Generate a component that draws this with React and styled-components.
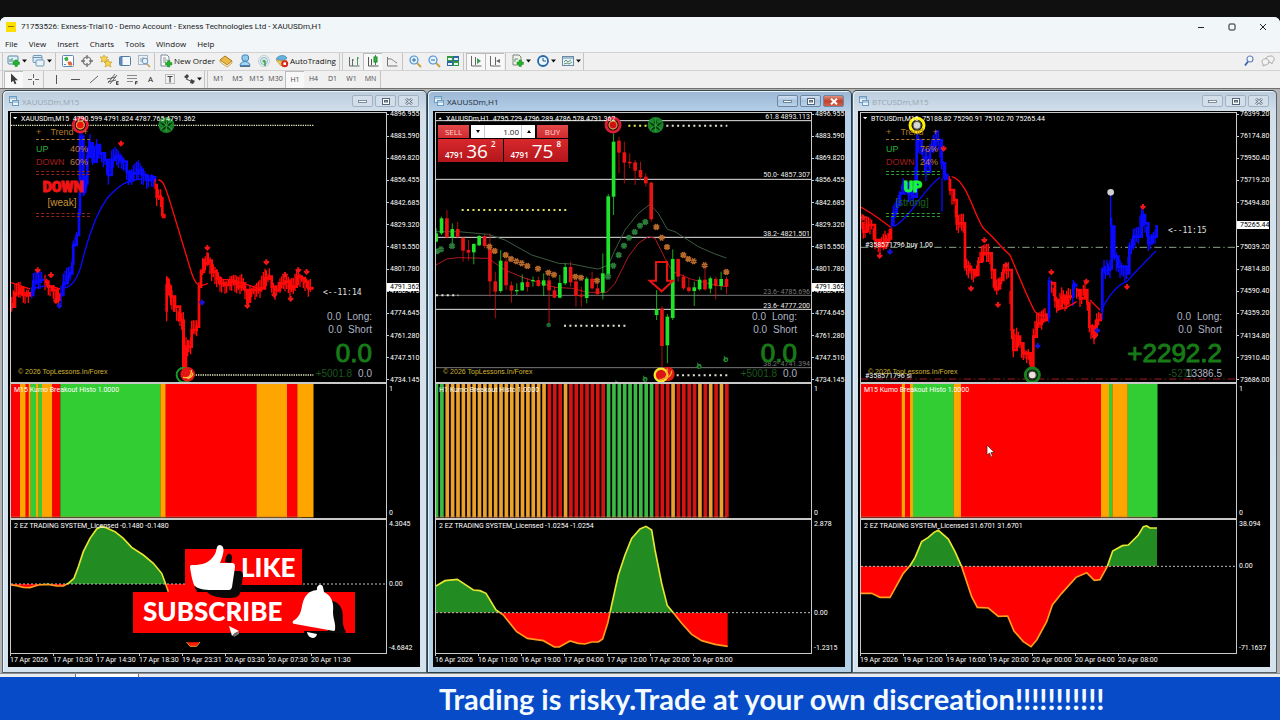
import React from 'react';
import styled, { createGlobalStyle, css } from 'styled-components';

const ui = `"Open Sans", "Noto Sans", sans-serif`;
const chartFont = `Roboto, "Liberation Sans", sans-serif`;
const arial = `"Liberation Sans", sans-serif`;

const GlobalStyle = createGlobalStyle`
  *, *::before, *::after { box-sizing: border-box; }
  body { margin: 0; background: #101010; font-family: ${ui}; }
  button, input { font: inherit; color: inherit; padding: 0; margin: 0; border: 0; background: none; }
`;

const Screen = styled.div`
  position: relative;
  display: flex;
  flex-direction: column;
  min-height: 100vh;
  padding-top: 17px;
  background: #101010;
  overflow: hidden;
`;
const Terminal = styled.div`
  display: flex;
  flex-direction: column;
  background: #f0f0f0;
  border-radius: 6px 6px 0 0;
  overflow: hidden;
`;
const TitleBar = styled.header`
  display: flex;
  align-items: center;
  gap: 5px;
  height: 19px;
  padding: 0 4px 0 6px;
  background: #f1f6f9;
  color: #1c1c1c;
  font-size: 8px;
`;
const AppLogo = styled.span`
  display: flex;
  align-items: center;
  justify-content: center;
  width: 10px;
  height: 10px;
  background: #fde000;
  &::after { content: ''; width: 6px; height: 1px; background: #8a7a10; }
`;
const AppTitle = styled.h1`
  flex: 1;
  margin: 0;
  font-family: Roboto, sans-serif;
  font-size: 8px;
  font-weight: 400;
  white-space: nowrap;
`;
const SystemButton = styled.button`
  display: flex;
  justify-content: center;
  align-items: center;
  width: 26px;
  height: 18px;
`;
const MenuBar = styled.nav`
  display: flex;
  gap: 11px;
  height: 16px;
  padding-left: 5px;
  background: #f3f6f8;
  align-items: center;
`;
const MenuItem = styled.button`
  color: #111;
  font-size: 8px;
  line-height: 14px;
`;
const ToolRow = styled.div`
  display: flex;
  align-items: stretch;
  height: 18px;
  border-top: 1px solid #d2d2d2;
`;
const ToolGroup = styled.div`
  display: flex;
  align-items: stretch;
  border-right: 1px solid #c4c4c4;
  padding-left: 4px;
  background: linear-gradient(90deg, transparent 2px, #c8c8c8 2px, #c8c8c8 3px, transparent 3px);
`;
const ToolSep = styled.span`
  width: 4px;
  background: linear-gradient(90deg, transparent 1px, #c4c4c4 1px, #c4c4c4 2px, transparent 2px);
`;
const ToolButton = styled.button`
  display: flex;
  align-items: center;
  justify-content: ${(p) => (p.$label ? 'flex-start' : 'center')};
  gap: 1px;
  width: ${(p) => p.$w || 19}px;
  padding-left: ${(p) => (p.$label ? 2 : 0)}px;
  padding-bottom: 2px;
  font-size: ${(p) => (p.$small ? 7 : 8)}px;
  color: ${(p) => (p.$small ? '#4c4c4c' : '#111')};
  white-space: nowrap;
  ${(p) => p.$pressed && css`
    background: #f8f8f8;
    border-top: 1px solid #bdbdbd;
    border-left: 1px solid #bdbdbd;
  `}
`;
const ToolSide = styled.div`
  display: flex;
  margin-left: auto;
  padding-right: 3px;
`;
const Workspace = styled.main`
  display: grid;
  grid-template-columns: repeat(3, minmax(0, 1fr));
  padding: 1px 3px 0 2px;
  border-top: 1px solid #707070;
  background: #b4b4b4;
`;
const WindowFrame = styled.section`
  display: flex;
  flex-direction: column;
  min-width: 0;
  padding: 0 6px 5px 5px;
  border: 1px solid ${(p) => (p.$active ? '#23404f' : '#50616c')};
  border-top-color: #39434a;
  border-radius: 5px 5px 0 0;
  background: ${(p) => (p.$active
    ? 'linear-gradient(#9bb7d4, #b6d0e9 22px, #b3d0e6)'
    : 'linear-gradient(#bccddd, #d3e0ec 22px, #d5e3ee)')};
  box-shadow: inset 1px 1px 0 #e9f3fa;
`;
const WindowTitle = styled.div`
  display: flex;
  align-items: center;
  gap: 2px;
  height: 20px;
  padding-right: 1px;
`;
const WindowName = styled.h2`
  flex: 1;
  margin: 0;
  font-size: 8px;
  font-weight: 400;
  color: ${(p) => (p.$active ? '#1b2b3a' : '#98a5b2')};
`;
const WindowButton = styled.button`
  display: flex;
  align-items: center;
  justify-content: center;
  width: 21px;
  height: 12px;
  border: 1px solid ${(p) => (p.$active ? '#6b86a2' : '#a3b2c1')};
  border-radius: 2px;
  background: ${(p) => (p.$danger
    ? 'linear-gradient(#dd8f80, #c2402c 50%, #d0604c)'
    : p.$active ? 'linear-gradient(#cfe0f1, #a8c3de 50%, #bcd4ea)' : '#d2deea')};
`;
const WindowButtons = styled.div`
  display: flex;
  gap: 2px;
`;
const ChartBox = styled.div`
  display: flex;
  flex-direction: column;
  padding: 1px 0 0 2px;
  background: #000;
  color: #fff;
  font-family: ${chartFont};
  font-size: 7px;
  line-height: 8px;
`;
const ChartRow = styled.div`
  display: flex;
  height: ${(p) => p.$h}px;
`;
const Plot = styled.div`
  position: relative;
  flex: 1;
  min-width: 0;
  overflow: hidden;
  border: solid #c9c9c9;
  border-width: ${(p) => p.$edges};
  > svg { display: block; width: 100%; height: 100%; }
`;
const PlotCaption = styled.p`
  position: absolute;
  left: ${(p) => (p.$indent ? 10 : 3)}px;
  top: 2px;
  margin: 0;
  white-space: pre;
`;
const Scale = styled.ol`
  position: relative;
  display: flex;
  flex-direction: column;
  justify-content: space-between;
  width: 33px;
  margin: ${(p) => p.$margin || '0'};
  padding: ${(p) => p.$pad || '0'};
  list-style: none;
`;
const PriceMark = styled.li`
  display: flex;
  align-items: center;
  gap: 1px;
  height: 8px;
  &::before { content: ''; width: 2px; height: 1px; background: #ccc; }
`;
const PlainMark = styled.li`
  padding-left: 2px;
`;
const CurrentPrice = styled.li`
  position: absolute;
  left: 0;
  width: 32px;
  height: 8px;
  padding-left: 3px;
  background: #fff;
  color: #000;
`;
const ZeroMark = styled.li`
  position: absolute;
  left: 2px;
`;
const TimeAxis = styled.ol`
  display: flex;
  height: 13px;
  margin: 0;
  padding: 0;
  list-style: none;
`;
const TimeMark = styled.li`
  width: 43px;
  padding-top: 2px;
  white-space: nowrap;
  background: linear-gradient(#c9c9c9, #c9c9c9) 0 0 / 1px 2px no-repeat;
`;
const Account = styled.dl`
  position: absolute;
  right: 14px;
  bottom: 2px;
  display: flex;
  flex-direction: column;
  align-items: flex-end;
  margin: 0;
  color: #aeb4c4;
  font-family: ${arial};
  font-size: 10px;
  line-height: 13px;
`;
const AccountRow = styled.div`
  display: flex;
  flex-direction: row-reverse;
  gap: 6px;
`;
const AccountLabel = styled.dt``;
const AccountValue = styled.dd`
  margin: 0;
  color: ${(p) => (p.$green ? '#1c571c' : 'inherit')};
  margin-right: ${(p) => (p.$overlap ? -14 : 0)}px;
`;
const Profit = styled.div`
  margin-top: 3px;
  color: #177a17;
  font-size: 26px;
  line-height: 28px;
  -webkit-text-stroke: 1px #177a17;
`;
const Copyright = styled.p`
  position: absolute;
  left: 7px;
  bottom: 6px;
  margin: 0;
  color: #d0b531;
  font-family: ${arial};
`;
const TrendPanel = styled.div`
  position: absolute;
  left: 25px;
  top: 14px;
  display: flex;
  flex-direction: column;
  width: 54px;
  font-family: ${arial};
  font-size: 9px;
  line-height: 10px;
`;
const TrendLine = styled.div`
  display: flex;
  justify-content: ${(p) => (p.$center ? 'center' : 'space-between')};
  margin-top: ${(p) => p.$gap || 0}px;
  padding-right: 2px;
  color: ${(p) => p.$c};
  font-size: ${(p) => (p.$center ? 10 : 9)}px;
`;
const TrendPart = styled.span`
  color: ${(p) => p.$c};
`;
const TrendRule = styled.div`
  height: ${(p) => (p.$double ? 4 : 1)}px;
  margin-top: ${(p) => p.$gap}px;
  border: dashed ${(p) => p.$c};
  border-width: ${(p) => (p.$double ? '1px 0' : '1px 0 0')};
`;
const Verdict = styled.strong`
  margin-top: 3px;
  text-align: center;
  color: ${(p) => p.$c};
  font-family: Roboto, ${arial};
  font-weight: 900;
  font-size: 14px;
  line-height: 18px;
  -webkit-text-stroke: 1px ${(p) => p.$c};
`;
const FibLabel = styled.span`
  position: absolute;
  right: 1px;
  color: ${(p) => (p.$dim ? '#777' : '#eee')};
`;
const Ticket = styled.form`
  position: absolute;
  left: 2px;
  top: 12px;
  display: grid;
  grid-template-columns: repeat(2, minmax(0, 1fr));
  gap: 1px;
  width: 130px;
  color: #fff;
  font-family: ${ui};
`;
const TicketTop = styled.div`
  grid-column: 1 / -1;
  display: flex;
  gap: 2px;
  height: 13px;
`;
const TicketSide = styled.button`
  flex: none;
  width: 31px;
  background: linear-gradient(#e24848, #d22a2e);
  font-size: 8px;
  line-height: 13px;
  color: #f5dcdc;
`;
const Volume = styled.div`
  display: flex;
  flex: 1;
  min-width: 0;
  align-items: stretch;
  background: #fff;
  color: #222;
  font-size: 8px;
`;
const VolumeStep = styled.button`
  display: flex;
  flex: none;
  align-items: center;
  justify-content: center;
  width: 13px;
`;
const VolumeInput = styled.input`
  flex: 1;
  min-width: 0;
  border: solid #ccc;
  border-width: 0 1px;
  padding-right: 2px;
  text-align: right;
`;
const Quote = styled.button`
  display: flex;
  justify-content: center;
  align-items: flex-end;
  gap: 3px;
  height: 23px;
  padding-bottom: 3px;
  background: linear-gradient(#d9282c, #b3161b);
  font-size: 8px;
  line-height: 8px;
  font-weight: 600;
`;
const QuotePips = styled.span`
  font-size: 19px;
  line-height: 16px;
  font-weight: 400;
`;
const QuotePoint = styled.sup`
  align-self: flex-start;
  padding-top: 1px;
  font-size: 8px;
  line-height: 8px;
`;
const TabStrip = styled.div`
  display: flex;
  height: 4px;
  padding-left: 75px;
  border-top: 1px solid #8e8e8e;
  background: #e8ecee;
`;
const ActiveTab = styled.span`
  width: 64px;
  background: #fff;
  border: solid #777;
  border-width: 0 1px;
`;
const Banner = styled.footer`
  flex: 1;
  display: flex;
  align-items: center;
  min-height: 43px;
  padding-left: 439px;
  background: #084bc8;
  color: #f4fbff;
  font-family: Lato, sans-serif;
  font-weight: 700;
  font-size: 29px;
  line-height: 36px;
  font-variant-ligatures: none;
  white-space: nowrap;
`;
const Promo = styled.div`
  position: absolute;
  left: 133px;
  top: 549px;
  display: flex;
  flex-direction: column;
  gap: 7px;
  width: 222px;
  color: #fff;
  font-family: Lato, sans-serif;
  font-weight: 900;
  font-size: 26px;
`;
const LikeTag = styled.div`
  width: 117px;
  height: 36px;
  margin-left: 52px;
  padding-left: 56px;
  background: #fe0000;
  line-height: 36px;
`;
const SubscribeTag = styled.div`
  height: 41px;
  padding-left: 10px;
  background: #fe0000;
  line-height: 39px;
`;
const PromoArt = styled.svg`
  position: absolute;
  left: 0;
  top: -8px;
`;
const Pointer = styled.svg`
  position: absolute;
  left: 986px;
  top: 444px;
`;

/* ---------- toolbar icons, 14 x 14 ---------- */
const Plus = ({ x = 8, y = 8 }) => (
  <path transform={`translate(${x} ${y})`} d="M2 0h2.400v2H6.400v2.400h-2v2H2v-2H0V2h2z" fill="#23b32b" stroke="#138a1c" strokeWidth=".5" />
);
const icons = {
  newChart: <><rect x="1" y="2" width="10" height="8" rx="1" fill="#dff0f8" stroke="#5b87a4" /><path d="M3 8V5M5 8V4M7 8V6" stroke="#3b8a62" /><Plus x={6} y={6} /></>,
  profiles: <><rect x="1" y="1.500" width="9" height="7" rx="1" fill="#d8eaf7" stroke="#6f96b2" /><path d="M1 3.500h9" stroke="#6f96b2" /><rect x="4" y="6" width="8" height="6" rx="1" fill="#e8f3fa" stroke="#6f96b2" /></>,
  market: <><rect x="1.500" y="1.500" width="11" height="11" rx="1" fill="#fff" stroke="#5c88b8" /><path d="M3.500 4.500L6 3l1 3-2 1z" fill="#3bad4b" stroke="#3bad4b" /><path d="M7 8l3 0 1 3-3 0z" fill="#e2693a" stroke="#e2693a" /><path d="M3 10.500h2" stroke="#5c88b8" /></>,
  target: <g fill="none" stroke="#707070"><circle cx="7" cy="7" r="4" strokeWidth="1.200" /><path d="M7 1v4M7 9v4M1 7h4M9 7h4" strokeWidth="1.300" /></g>,
  stars: <g fill="#f7d548" stroke="#c7a132" strokeWidth=".7"><path d="M1 3h3l1-2 1 2h3L7 5l1 3-3-1-3 1 1-3z" /><path d="M5 8h2.500l1.500-3 1 3h3l-2 2 1 3-3-1.500-3 1.500 1-3z" /></g>,
  panel: <><rect x="1.500" y="2.500" width="11" height="9" rx="1" fill="#f4f8fb" stroke="#4f7ca8" /><path d="M2 3h2.500v8H2z" fill="#5d8abb" /></>,
  tester: <><rect x="1.500" y="1.500" width="9" height="9" fill="#edf2f6" stroke="#a5b6c6" /><path d="M4 8V4M6 7V3" fill="none" stroke="#8ba0ac" /><circle cx="8" cy="7" r="2.800" fill="#e3f1fb" stroke="#6d96bd" /><path d="M10 10l3 3" stroke="#c69a4d" strokeWidth="1.500" /></>,
  order: <><path d="M2 1h6l2 2v9H2z" fill="#fafafa" stroke="#7d8b99" /><path d="M4 4h3M4 6h4M4 8h3" stroke="#8a949e" /><Plus x={6.5} y={6.5} /></>,
  book: <><path d="M1 6l5-4 7 5-5 4z" fill="#eaba45" stroke="#a97722" /><path d="M1 6l0 2 7 5 5-4V7l-5 4z" fill="#fff0bd" stroke="#a97722" strokeWidth=".6" /></>,
  user: <><rect x="4" y="1" width="6.500" height="6" rx="2" fill="#8fc9ee" stroke="#3f86bf" /><path d="M2 11.500c0-2 2-4 5-4s5 2 5 4z" fill="#a7d4f2" stroke="#3f86bf" /><path d="M2 12.500h10" stroke="#5e6d79" /></>,
  signal: <g fill="none"><circle cx="7" cy="7" r="5.500" stroke="#bcd0d8" /><circle cx="7" cy="7" r="3.500" stroke="#7cb8cf" /><circle cx="7" cy="7" r="1.600" fill="#4fae55" /><path d="M8 7v5" stroke="#51a25b" strokeWidth="1.700" /></g>,
  auto: <><path d="M1 5c2-4 9-5 11-1l-4 3z" fill="#63b0dd" stroke="#2e79a9" strokeWidth=".6" /><path d="M1 6l5 6 6-6-5 1z" fill="#f2c645" stroke="#a8852c" strokeWidth=".5" /><circle cx="9.700" cy="9.700" r="3.500" fill="#d9281e" /><rect x="8.400" y="8.400" width="2.600" height="2.600" fill="#fff" /></>,
  bars: <g stroke="#5e6d66" fill="none"><path d="M2.500 3v9h10M5.500 5v7M5 6h2" /><path d="M10.500 3v8M10 4h2" stroke="#4a9a5c" /></g>,
  candles: <g stroke="#555" fill="none"><path d="M2.500 3v9h10M5.500 5v6" /><path d="M9.500 1v10" stroke="#259735" /><rect x="8" y="3" width="3" height="5" fill="#35b748" stroke="#1d8730" /></g>,
  line: <path d="M2.500 3v9h10M3 5c4-1 5 2 9 4" stroke="#777" fill="none" />,
  zoomIn: <><path d="M9 9l4 4" stroke="#cba33b" strokeWidth="2" /><circle cx="6" cy="6" r="4" fill="#e3f2fd" stroke="#4c90cc" strokeWidth="1.200" /><path d="M4 6h4M6 4v4" stroke="#2c6ba6" /></>,
  zoomOut: <><path d="M9 9l4 4" stroke="#cba33b" strokeWidth="2" /><circle cx="6" cy="6" r="4" fill="#e3f2fd" stroke="#4c90cc" strokeWidth="1.200" /><path d="M4 6h4" stroke="#2c6ba6" /></>,
  tile: <><path d="M1 2h6v5H1zM7 7h6v5H7z" fill="#2f9a3b" /><path d="M7 2h6v5H7zM1 7h6v5H1z" fill="#2d66a8" /><path d="M2 4h4v2H2zM8 4h4v2H8zM2 9h4v2H2zM8 9h4v2H8z" fill="#e8f4f5" /></>,
  scroll: <><path d="M2.500 2v10h10M6.500 3v8" stroke="#666" fill="none" /><path d="M8 4l4 3-4 3z" fill="#3f9d58" /></>,
  shift: <><path d="M2.500 2v10h10M7.500 3v8" stroke="#666" fill="none" /><path d="M12 5L8 7l4 2z" fill="#666" /></>,
  indicator: <><path d="M2 1h6l2 2v8H2z" fill="#f1f1ec" stroke="#7a8a78" /><path d="M4 8V5h3" stroke="#597" fill="none" /><Plus x={6} y={6} /></>,
  clock: <><circle cx="7" cy="7" r="5" fill="#edf7fe" stroke="#2369ad" strokeWidth="1.800" /><path d="M7 4v3h3" stroke="#2b5480" fill="none" /></>,
  template: <><rect x="1.500" y="2.500" width="11" height="9" fill="#e9f2f6" stroke="#668ba5" /><path d="M2 4h10" stroke="#668ba5" /><path d="M3 8l2-2 2 2 3-2M3 10l3-1 2 1 3-2" stroke="#5e987b" fill="none" /></>,
  pointer: <path d="M4 1.500v9l2.200-1.800 1.500 3.600 1.700-.8-1.500-3.300H11z" fill="#3c3c3c" />,
  cross: <path d="M7.500 2v4M7.500 9v4M2 7.500h4M9 7.500h4" stroke="#666" />,
  vline: <path d="M7.500 3v9" stroke="#555" />,
  hline: <path d="M3 7.500h9" stroke="#555" />,
  slope: <path d="M3 11l8-7" stroke="#666" />,
  channel: <><path d="M2 11l7-9M4 12l7-9M1 7l9-2M2 10l8-2" stroke="#555" strokeWidth=".9" /><path d="M12.500 9.500h-2v3h2M10.500 11h2" stroke="#444" fill="none" /></>,
  fib: <><path d="M2 3.500h10M2 6.500h10M2 9.500h6" stroke="#8a8a8a" /><path d="M12.500 9.500h-2v3M10.500 11h2" stroke="#444" fill="none" /></>,
  arrows: <><path d="M2 5l3-3 2 2-2 3z" fill="#444" /><path d="M4 7l7 3" stroke="#555" /><path d="M9 7l4 2-2 3-3-1z" fill="#444" /></>,
  search: <><circle cx="8" cy="5" r="3" fill="#f1f6ff" stroke="#6a83bb" strokeWidth="1.200" /><path d="M6 7.500l-3 4" stroke="#3e63ab" strokeWidth="1.800" /></>,
  chat: <g fill="#f2f2f2" stroke="#a8a8a8"><path d="M6 3c4-2 8-1 7 3-1 2-2 2-2 4L9 8C5 9 4 5 6 3z" /><path d="M1 7c1-3 6-3 7 0 0 3-2 4-4 4l-2 1v-2c-1-1-1-2-1-3z" /></g>,
};
const Icon = ({ name }) => <svg width="14" height="14" viewBox="0 0 14 14" aria-hidden="true">{icons[name]}</svg>;
const Caret = () => <svg width="5" height="4" viewBox="0 0 5 4" aria-hidden="true"><path d="M0 .5h5L2.500 3.500z" fill="#111" /></svg>;
const Tool = ({ name, drop, pressed }) => (
  <ToolButton type="button" aria-label={name} $w={drop ? 25 : 19} $pressed={pressed}>
    <Icon name={name} />{drop && <Caret />}
  </ToolButton>
);

/* ---------- chart data; drawing units are a third of a pixel ---------- */
const RED = '#ff0a0a', BLUE = '#0a0aff';
const gold = {
  title: 'XAUUSDm,M15',
  caption: 'XAUUSDm,M15  4790.599 4791.824 4787.765 4791.362',
  prices: ['4896.955', '4883.590', '4869.820', '4856.455', '4842.685', '4829.320', '4815.550', '4801.780', '4788.415', '4774.645', '4761.280', '4747.510', '4734.145'],
  price: '4791.362', priceTop: 171,
  histo: 'M15 Kumo Breakout Histo 1.0000',
  osc: '2 EZ TRADING SYSTEM_Licensed -0.1480 -0.1480',
  hi: '4.3045', lo: '-4.6842', zero: 627,
  times: ['17 Apr 2026', '17 Apr 10:30', '17 Apr 14:30', '17 Apr 18:30', '19 Apr 23:31', '20 Apr 03:30', '20 Apr 07:30', '20 Apr 11:30'],
  bands: [[33, 60, 'r'], [60, 77, 'o'], [77, 86, 'r'], [86, 92, 'o'], [92, 108, 'g'], [108, 116, 'o'], [116, 126, 'g'], [126, 157, 'o'], [157, 181, 'r'], [181, 481, 'g'], [481, 497, 'o'], [497, 770, 'r'], [770, 861, 'o'], [861, 892, 'r'], [892, 940, 'o']],
  curve: '33,630 50,632 70,637 90,638 115,630 145,628 170,633 190,633 205,625 222,610 235,575 250,530 270,490 290,462 303,455 315,457 345,470 370,490 395,517 430,540 460,565 485,595 495,622 505,650',
  traces: [
    [RED, '35,650 45,610 60,595 70,615 80,610 90,620'],
    [BLUE, '95,615 100,575 110,575 120,570 130,572'],
    [RED, '135,575 145,590 160,600 170,630 180,610'],
    [BLUE, '183,615 190,580 200,560 210,550 217,520 220,465 230,435 237,370 240,290 240,140 246,140 250,290 258,280 262,200 270,160 278,215 290,165 300,190 315,210 325,255 335,210 345,200 360,210 370,215 380,245 390,270 400,250 415,240 425,255 440,270 455,262 465,275'],
    [RED, '465,285 470,320 482,325 487,375 493,385'],
    [RED, '500,665 500,585 508,590 512,620 525,650 540,690 550,690 550,850 558,770 572,770 575,720 590,710 597,590 603,545 612,520 625,512 635,545 650,565 660,580 675,585 690,575 705,580 715,590 725,580 735,600 745,635 750,600 765,600 780,595 795,565 808,560 815,590 825,600 840,580 855,575 870,595 880,590 890,560 905,565 915,575 925,595 937,590'],
  ],
  lines: [
    [BLUE, 'M190 595C220 590 235 560 245 520C265 440 290 360 330 315C360 285 380 270 425 267M100 595L135 588M246 140V300'],
    [RED, 'M475 270C490 270 495 290 510 335L575 550C585 580 595 595 623 580M33 578L90 597M140 585L180 597M650 568L700 570L780 597M553 690V850'],
  ],
  pins: [[113, 541], [153, 556], [363, 161], [622, 474], [799, 517], [855, 555], [895, 541], [920, 546], [168, 633], [742, 648], [823, 615], [872, 627], [36, 648]],
  bluePins: [[178, 648], [606, 638]],
  clock: ['<--11:14', 970, 605],
  trend: { up: '40%', down: '60%', word: 'DOWN', strength: '[weak]', c: '#f01414', sc: '#c9923a', rule: '#8f2420' },
  profit: '0.0', total: '+5001.8', last: '0.0',
};
const btc = {
  title: 'BTCUSDm,M15',
  caption: 'BTCUSDm,M15  75188.82 75290.91 75102.70 75265.44',
  prices: ['76399.20', '76174.80', '75950.40', '75719.20', '75494.80', '', '75039.20', '74814.80', '74590.40', '74359.20', '74134.80', '73910.40', '73686.00'],
  price: '75265.44', priceTop: 109,
  histo: 'M15 Kumo Breakout Histo 1.0000',
  osc: '2 EZ TRADING SYSTEM_Licensed 31.6701 31.6701',
  hi: '38.094', lo: '-71.1637', zero: 574,
  times: ['19 Apr 2026', '19 Apr 12:00', '19 Apr 16:00', '19 Apr 20:00', '20 Apr 00:00', '20 Apr 04:00', '20 Apr 08:00'],
  bands: [[33, 155, 'r'], [155, 165, 'o'], [165, 180, 'r'], [180, 189, 'o'], [189, 311, 'g'], [311, 333, 'o'], [333, 753, 'r'], [753, 777, 'o'], [777, 787, 'g'], [787, 833, 'o'], [833, 922, 'g']],
  curve: '33,655 65,655 90,667 120,667 160,595 180,572 195,548 215,500 235,487 252,472 265,466 295,492 315,530 335,575 365,665 382,697 415,699 445,724 473,723 492,768 520,800 543,815 560,795 590,740 607,690 635,655 678,607 710,593 733,616 750,614 772,574 788,528 817,512 835,510 865,480 880,455 890,453 900,459 921,459',
  traces: [
    [RED, '36,400 40,425 50,405 65,405 75,450 90,470 105,450 118,445 123,415'],
    [BLUE, '125,405 130,370 140,345 150,310 160,280 175,310 190,320 200,200 200,150 215,180 228,245 240,180 255,150 265,150 275,220 285,255 292,270'],
    [RED, '298,270 300,300 312,330 320,400 340,400 345,530 360,540 375,555 385,515 395,490 415,490 425,540 435,595 450,570 460,540 475,540 485,720 490,780 500,740 510,760 520,790 535,790 543,830 550,740 560,700 575,690 590,670'],
    [BLUE, '596,680 597,575 603,575'],
    [RED, '605,580 615,630 625,650 635,620 645,640 655,620 666,620'],
    [BLUE, '668,620 670,585 678,590'],
    [RED, '680,600 690,625 705,600 712,640 718,710 732,735 740,690 752,670'],
    [BLUE, '757,665 757,540 780,535 785,410 793,500 805,530 830,550 838,470 850,460 850,440 865,440 875,375 885,400 895,460 905,440 920,430 920,405'],
  ],
  lines: [
    [RED, 'M33 352Q60 365 122 412M305 260C350 270 370 370 400 415C440 450 450 470 480 495C500 540 530 620 555 665Q570 680 590 675M720 630L750 660M620 660Q650 655 680 635'],
    [BLUE, 'M132 408Q155 400 200 340T270 262M276 265V365M782 315V410M757 655Q790 590 830 575Q880 520 918 483M284 225V270M788 410V510'],
  ],
  pins: [[40, 383], [89, 498], [281, 176], [403, 451], [467, 526], [363, 596], [444, 645], [604, 547], [709, 575], [733, 740], [831, 591], [879, 351]],
  bluePins: [[120, 486], [563, 768], [742, 722]],
  clock: ['<--11:15', 953, 419],
  trend: { up: '76%', down: '24%', word: 'UP', strength: '[strong]', c: '#1bf43c', sc: '#1c651f', rule: '#2c9c35' },
  profit: '+2292.2', total: '-5271', last: '13386.5', overlap: true,
};
const goldHour = {
  title: 'XAUUSDm,H1', active: true,
  caption: 'XAUUSDm,H1  4795.729 4796.289 4786.578 4791.362',
  prices: gold.prices, price: '4791.362', priceTop: 171,
  histo: 'H1 Kumo Breakout Histo 1.0000',
  osc: '2 EZ TRADING SYSTEM_Licensed -1.0254 -1.0254',
  hi: '2.878', lo: '-1.2315', zero: 713,
  times: ['16 Apr 2026', '16 Apr 11:00', '16 Apr 19:00', '17 Apr 04:00', '17 Apr 12:00', '17 Apr 20:00', '20 Apr 05:00'],
  curve: '33,633 60,617 97,613 145,645 165,647 183,655 213,705 235,720 275,770 307,790 355,797 388,816 403,816 435,798 460,805 480,807 500,801 520,801 533,792 548,745 560,690 580,600 600,540 620,490 645,462 663,454 680,465 690,525 710,625 727,692 745,713 770,745 800,778 830,797 870,808 908,814',
  profit: '0.0', total: '+5001.8', last: '0.0',
};
const candleData = `g 430 455 415 455;g 385 430 380 435;r 385 442 360 445;g 417 442 400 470;r 417 440 395 445;r 443 482 443 515;r 480 488 450 512;g 462 487 460 523;g 438 466 435 468;r 438 468 432 475;r 464 574 430 620;r 574 605 545 685;g 512 603 480 608;r 514 586 505 600;r 586 602 575 638;g 600 603 580 615;g 577 601 553 603;r 576 591 565 605;g 570 574 560 590;r 570 588 560 590;g 571 587 550 618;r 571 601 560 700;r 601 623 588 625;g 579 623 555 625;g 531 580 520 585;r 531 577 515 590;r 574 618 560 650;r 614 620 590 650;g 566 624 560 640;r 566 595 545 600;r 595 612 575 618;g 550 608 490 628;g 319 557 312 560;g 155 320 130 375;r 152 188 140 250;r 187 218 155 280;r 215 220 190 235;r 217 242 210 285;r 240 262 215 270;r 260 280 250 290;r 278 388 275 395;g 658 675 600 690;r 656 768 648 830;g 680 766 672 820;g 507 684 478 690;r 507 560 505 575;r 560 595 553 600;r 592 603 565 608;g 592 603 575 648;g 569 598 560 602;r 569 598 530 602;g 565 596 560 610;r 567 588 560 628;g 567 588 545 600;r 567 590 560 612`
  .split(';').map((row, i) => {
    const [c, top, bottom, high, low] = row.split(' ');
    return { x: 33 + i * 16.13, c, top: +top, bottom: +bottom, high: +high, low: +low };
  });
const hourBars = 'ggooooooooooooooooooorrrorrrrrrrgggggggggrrrorrrrororor';
const bandColor = { r: '#ff0000', o: '#ffa500', g: '#32cd32' };
const barColor = { r: '#d41313', o: '#eba12b', g: '#3bb945' };
const orangeStars = [[193, 470], [209, 483], [242, 495], [258, 507], [274, 514], [290, 520], [307, 528], [339, 536], [370, 548], [387, 554], [451, 560], [468, 563], [516, 572], [694, 411], [710, 443], [726, 471], [775, 495], [790, 507], [806, 514], [839, 526], [904, 546]];
const greenStars = [[36, 484], [48, 478], [81, 468], [549, 560], [565, 527], [581, 495], [597, 467], [612, 443], [629, 426], [645, 407], [661, 396]];
const fibs = [[92, 80, '61.8 4893.113'], [268, 255, '50.0- 4857.307'], [442, 431, '38.2- 4821.501'], [616, 605, '23.6- 4785.696', true], [658, 647, '23.6- 4777.200'], [833, 822, '38.2- 4741.394', true]];

/* Short vertical wicks spread along a price trace. */
const wicks = (points) => {
  const p = points.split(' ').map((s) => s.split(',').map(Number));
  let d = '';
  for (let i = 1; i < p.length; i += 1) {
    const [x0, y0] = p[i - 1];
    const [x1, y1] = p[i];
    const n = Math.max(1, Math.round(Math.abs(x1 - x0) / 5));
    for (let k = 0; k < n; k += 1) {
      const x = x0 + ((x1 - x0) * k) / n;
      const y = y0 + ((y1 - y0) * k) / n;
      const a = 7 + Math.abs(Math.sin(x * 3.1)) * 22;
      const b = 7 + Math.abs(Math.cos(x * 2.3)) * 22;
      d += `M${Math.round(x)} ${Math.round(y - a)}V${Math.round(y + b)}`;
    }
  }
  return d;
};
const steps = (points) => points.split(' ').map((s, i) => {
  const [x, y] = s.split(',');
  return i ? `H${x}V${y}` : `M${x} ${y}`;
}).join('');

const Pin = ({ x, y, c = '#f01616' }) => (
  <path transform={`translate(${x} ${y})`} fill={c} d="M-3-9h6v5h6l-1 5-8 8-8-8-1-5h6z" />
);
const Bullseye = ({ x, y, ring, inner, dot }) => (
  <g transform={`translate(${x} ${y})`}>
    <circle r="21" fill="#000" stroke={ring} strokeWidth="9" />
    <circle r="12" fill={dot} stroke={inner} strokeWidth="4" />
  </g>
);
const Badge = ({ x, y }) => (
  <g transform={`translate(${x} ${y})`}>
    <circle r="24" fill="#188127" />
    <path d="M0-20L5-6 20-8 8 3 14 18 0 9-14 18-8 3-20-8-5-6z" fill="#08370e" />
    <path d="M-17-13L17 13M17-13L-17 13M0-20V20" stroke="#2da33c" strokeWidth="3" />
  </g>
);
const Spark = ({ x, y, c }) => (
  <g transform={`translate(${x} ${y})`} stroke={c} fill="none">
    <circle r="6" strokeWidth="3" />
    <path strokeWidth="4" d="M-9-4L9 4M-9 4L9-4M-4-9L4 9M4-9L-4 9" />
  </g>
);
const Drawing = ({ y, children }) => <g transform={`translate(-11 ${y}) scale(${1 / 3})`}>{children}</g>;

const MinuteDrawing = ({ d }) => {
  const isBtc = d === btc;
  return (
    <>
      {!isBtc && <path d="M33 106H940M580 855H940" stroke="#dce8bd" strokeWidth="4" strokeDasharray="4 3" />}
      {isBtc && <path d="M33 472H3000" stroke="#8ba48b" strokeWidth="3" strokeDasharray="22 9 4 9" />}
      {isBtc && <path d="M33 867H3000" stroke="#a21c24" strokeWidth="3" strokeDasharray="22 9 4 9" />}
      {d.traces.map(([c, pts], i) => (
        <g key={i} fill="none" stroke={c}>
          <path d={wicks(pts)} strokeWidth="4" />
          <path d={steps(pts)} strokeWidth="8" />
        </g>
      ))}
      {d.lines.map(([c, path], i) => <path key={i} d={path} fill="none" stroke={c} strokeWidth="4" />)}
      {d.pins.map(([x, y]) => <Pin key={x} x={x} y={y} />)}
      {d.bluePins.map(([x, y]) => <Pin key={x} x={x} y={y} c="#1414d8" />)}
      {isBtc ? (
        <>
          <Bullseye x={201} y={106} ring="#fdf000" inner="#55553a" dot="#d6d6d6" />
          <circle cx="782" cy="307" r="10" fill="#d0d0d0" />
          <Bullseye x={547} y={855} ring="#19801f" inner="#3c4a38" dot="#efe0e0" />
        </>
      ) : (
        <>
          <Bullseye x={241} y={105} ring="#e01c32" inner="#f09b40" dot="#ef1212" />
          <Badge x={499} y={105} />
          <circle cx="552" cy="855" r="22" fill="none" stroke="#16992a" strokeWidth="6" />
          <circle cx="563" cy="853" r="22" fill="#e31515" />
          <path d="M549 862Q575 868 574 840M562 866Q580 862 578 848" stroke="#f8be3c" fill="none" strokeWidth="4" />
        </>
      )}
    </>
  );
};
const HourDrawing = () => (
  <>
    {fibs.map(([y, , label, dim]) => <path key={label} d={`M31 ${y}H3000`} stroke={dim ? '#777' : '#e4e4e4'} strokeWidth="3" />)}
    <g fill="none" strokeWidth="6">
      <path d="M110 360H424" stroke="#e3e36a" strokeDasharray="6 10.200" />
      <path d="M610 107H665" stroke="#f1f145" strokeDasharray="6 10.200" />
      <path d="M724 107H907M417 707H602M755 856H907M33 616H100" stroke="#e3e3d4" strokeDasharray="6 10.200" />
    </g>
    <path d="M33 425L100 425 190 433 240 450 320 495 400 520 440 522 490 532 520 537 550 525 570 480 600 420 640 370 675 343 700 370 727 418 750 425 820 470 870 492 904 504" fill="none" stroke="#3c5a40" strokeWidth="3" />
    <path d="M33 525L65 507 100 503 190 505 240 540 300 565 390 592 440 595 490 607 545 607 570 580 610 500 640 460 670 440 690 445 720 505 743 545 800 568 870 585 904 590" fill="none" stroke="#b01822" strokeWidth="3" />
    {candleData.map((k) => {
      const c = k.c === 'g' ? '#1fe42a' : '#e81414';
      return (
        <g key={k.x} fill={c}>
          <rect x={k.x - 1} y={k.high} width="3" height={k.low - k.high} opacity=".75" />
          <rect x={k.x - 5} y={k.top} width="11" height={Math.max(4, k.bottom - k.top)} />
        </g>
      );
    })}
    {orangeStars.map(([x, y]) => <Spark key={x} x={x} y={y} c="#b8692a" />)}
    {greenStars.map(([x, y]) => <Spark key={x} x={x} y={y} c="#2c7c3c" />)}
    <path d="M693 516H726V572H744L710 604 674 572H693Z" fill="none" stroke="#e81414" strokeWidth="6" />
    <Bullseye x={564} y={105} ring="#d91c38" inner="#d5913a" dot="#d01010" />
    <Badge x={692} y={105} />
    <circle cx="727" cy="852" r="22" fill="#df1c14" />
    <circle cx="708" cy="855" r="19" fill="#db1414" stroke="#f9e82a" strokeWidth="7" />
    <path d="M703 868Q729 872 726 836M712 866Q740 864 740 842" stroke="#f6a02c" fill="none" strokeWidth="4" />
    <circle cx="371" cy="705" r="7" fill="#1b6d2e" />
    {[[660, 866], [822, 827], [902, 807], [577, 880]].map(([x, y]) => (
      <g key={x} transform={`translate(${x} ${y})`} fill="#228a34">
        <path d="M-6-11L-1-5 6-4 8 3 4 9-4 9-8 3-5-2z" />
        <circle cx="1" cy="3" r="3" fill="#03230a" />
      </g>
    ))}
  </>
);
const Histogram = ({ d }) => (
  <svg aria-hidden="true"><Drawing y={-9}>
    {d.bands
      ? d.bands.map(([a, b, c]) => <rect key={a} x={a} y="27" width={b - a + 0.5} height="400" fill={bandColor[c]} />)
      : [...hourBars].map((c, i) => <rect key={i} x={29 + i * 16.13} y="27" width="11" height="400" fill={barColor[c]} />)}
    <path d="M33 426H905" stroke="#c87d50" strokeWidth="2" />
  </Drawing></svg>
);
const Oscillator = ({ d, id }) => {
  const pts = d.curve.split(' ');
  const end = pts[pts.length - 1].split(',')[0];
  const area = `M33 ${d.zero}L${pts.join(' ')} ${end},${d.zero}Z`;
  return (
    <svg aria-hidden="true"><Drawing y={-145}>
      <clipPath id={`up${id}`}><rect x="0" y="0" width="3000" height={d.zero} /></clipPath>
      <clipPath id={`down${id}`}><rect x="0" y={d.zero} width="3000" height="400" /></clipPath>
      <path d={area} fill="#228b22" clipPath={`url(#up${id})`} />
      <path d={area} fill="#ff0000" clipPath={`url(#down${id})`} />
      {d === gold && <path d="M498 627H590V655H507Z" fill="#ff0000" />}
      <path d={`M33 ${d.zero}H3000`} stroke="#bdbdbd" strokeWidth="3" strokeDasharray="6 6" />
      <polyline points={d.curve} fill="none" stroke="#ff9c1c" strokeWidth="5" clipPath={`url(#down${id})`} />
      <polyline points={d.curve} fill="none" stroke="#e4e632" strokeWidth="5" clipPath={`url(#up${id})`} />
      {d === gold && <path d="M562 802H598L589 813H571Z" fill="#ff1a00" />}
      {d === gold && <path d="M560 801L570 814H590L600 801" fill="none" stroke="#e9a22c" strokeWidth="3" />}
    </Drawing></svg>
  );
};
const Trend = ({ t }) => (
  <TrendPanel>
    <TrendLine $c="#b3772d"><TrendPart>+</TrendPart><TrendPart>Trend</TrendPart><TrendPart>+</TrendPart></TrendLine>
    <TrendRule $gap={2} $c="#a8722d" />
    <TrendLine $gap={4}><TrendPart $c="#2fae3c">UP</TrendPart><TrendPart $c="#c07a45">{t.up}</TrendPart></TrendLine>
    <TrendLine $gap={3}><TrendPart $c="#a31c1c">DOWN</TrendPart><TrendPart $c="#c07a45">{t.down}</TrendPart></TrendLine>
    <TrendRule $double $gap={4} $c={t.rule} />
    <Verdict $c={t.c}>{t.word}</Verdict>
    <TrendLine $center $gap={2} $c={t.sc}>{t.strength}</TrendLine>
    <TrendRule $double $gap={5} $c={t.rule} />
  </TrendPanel>
);
const OrderTicket = () => (
  <Ticket onSubmit={(e) => e.preventDefault()}>
    <TicketTop>
      <TicketSide type="button">SELL</TicketSide>
      <Volume>
        <VolumeStep type="button" aria-label="Decrease volume"><svg width="4" height="3"><path d="M0 0h4L2 3z" /></svg></VolumeStep>
        <VolumeInput aria-label="Volume" defaultValue="1.00" />
        <VolumeStep type="button" aria-label="Increase volume"><svg width="4" height="3"><path d="M0 3h4L2 0z" /></svg></VolumeStep>
      </Volume>
      <TicketSide type="button">BUY</TicketSide>
    </TicketTop>
    <Quote type="button">4791<QuotePips>36</QuotePips><QuotePoint>2</QuotePoint></Quote>
    <Quote type="button">4791<QuotePips>75</QuotePips><QuotePoint>8</QuotePoint></Quote>
  </Ticket>
);
const ChartWindow = ({ d, id }) => {
  const ink = d.active ? '#fff' : '#667585';
  const px = (v) => Math.round(v / 3);
  return (
    <WindowFrame $active={d.active}>
      <WindowTitle>
        <svg width="12" height="12" viewBox="0 0 12 12" aria-hidden="true"><g fill="#eaf4fb" stroke="#6d9cc2"><rect x="1.500" y="1.500" width="7" height="6" /><path d="M2 3h6" /><rect x="4.500" y="5.500" width="6" height="5" /><path d="M5 7h5" /></g></svg>
        <WindowName $active={d.active}>{d.title}</WindowName>
        <WindowButtons>
          <WindowButton type="button" aria-label="Minimize" $active={d.active}><svg width="9" height="6"><rect x=".5" y="2.500" width="8" height="2" fill="#fff" stroke={d.active ? '#54708c' : ink} strokeWidth=".8" /></svg></WindowButton>
          <WindowButton type="button" aria-label="Maximize" $active={d.active}><svg width="8" height="7"><rect x=".5" y=".5" width="7" height="6" fill="#fff" stroke="#54657a" /><rect x="2.500" y="2.500" width="3" height="1.500" fill="#9db" stroke="#54657a" /></svg></WindowButton>
          <WindowButton type="button" aria-label="Close" $active={d.active} $danger={d.active}><svg width="8" height="7"><path d="M1 .8l6 5.400M7 .8L1 6.200" stroke={ink} strokeWidth={d.active ? 2 : 2.6} />{!d.active && <path d="M1 .8l6 5.400M7 .8L1 6.200" stroke="#fff" />}</svg></WindowButton>
        </WindowButtons>
      </WindowTitle>
      <ChartBox>
        <ChartRow $h={272}>
          <Plot $edges="1px 1px 2px 1px">
            <svg aria-hidden="true">
              <Drawing y={-23}>
                {d.active ? <HourDrawing /> : <MinuteDrawing d={d} />}
                <path d={d.active ? 'M40 88H51L45.500 82Z' : 'M39 81H52L45.500 88Z'} fill="#fff" />
              </Drawing>
              {d.clock && <text x={px(d.clock[1]) - 11} y={px(d.clock[2]) - 20} fill="#e0e0e0" fontFamily="DejaVu Sans Mono, monospace" fontSize="8">{d.clock[0]}</text>}
              {id === 2 && <text x="4" y="134" fill="#fff">#358571796 buy 1.00</text>}
              {id === 2 && <text x="4" y="265" fill="#fff">#358571796 sl</text>}
            </svg>
            <PlotCaption $indent>{d.caption}</PlotCaption>
            {d.trend && <Trend t={d.trend} />}
            {d.active && <OrderTicket />}
            {d.active && fibs.map(([, y, label, dim]) => <FibLabel key={label} $dim={dim} style={{ top: px(y) - 27 }}>{label}</FibLabel>)}
            <Copyright>© 2026 TopLessons.In/Forex</Copyright>
            <Account>
              <AccountRow><AccountLabel>Long:</AccountLabel><AccountValue>0.0</AccountValue></AccountRow>
              <AccountRow><AccountLabel>Short</AccountLabel><AccountValue>0.0</AccountValue></AccountRow>
              <Profit>{d.profit}</Profit>
              <AccountRow><AccountValue>{d.last}</AccountValue><AccountValue $green $overlap={d.overlap}>{d.total}</AccountValue></AccountRow>
            </Account>
          </Plot>
          <Scale $margin="-2px 0 0">
            {d.prices.map((p) => <PriceMark key={p}>{p}</PriceMark>)}
            <CurrentPrice style={{ top: d.priceTop + 2 }}>{d.price}</CurrentPrice>
          </Scale>
        </ChartRow>
        <ChartRow $h={136}>
          <Plot $edges="0 1px 2px 1px"><Histogram d={d} /><PlotCaption>{d.histo}</PlotCaption></Plot>
          <Scale $pad="1px 0 3px"><PlainMark>1</PlainMark><PlainMark>0</PlainMark></Scale>
        </ChartRow>
        <ChartRow $h={134}>
          <Plot $edges="0 1px 1px 1px"><Oscillator d={d} id={id} /><PlotCaption>{d.osc}</PlotCaption></Plot>
          <Scale $pad="0 0 2px"><PlainMark>{d.hi}</PlainMark><ZeroMark style={{ top: px(d.zero) - 149 }}>0.00</ZeroMark><PlainMark>{d.lo}</PlainMark></Scale>
        </ChartRow>
        <TimeAxis>{d.times.map((t) => <TimeMark key={t}>{t}</TimeMark>)}</TimeAxis>
      </ChartBox>
    </WindowFrame>
  );
};

export default function App() {
  return (
    <Screen>
      <GlobalStyle />
      <Terminal>
        <TitleBar>
          <AppLogo />
          <AppTitle>71753526: Exness-Trial10 - Demo Account - Exness Technologies Ltd - XAUUSDm,H1</AppTitle>
          <SystemButton type="button" aria-label="Minimize"><svg width="8" height="8"><path d="M1 4.500h6" stroke="#222" /></svg></SystemButton>
          <SystemButton type="button" aria-label="Restore"><svg width="8" height="8"><rect x="1" y="1" width="6" height="6" rx="1" fill="none" stroke="#222" /></svg></SystemButton>
          <SystemButton type="button" aria-label="Close"><svg width="8" height="8"><path d="M1 1l6 6M7 1L1 7" stroke="#222" /></svg></SystemButton>
        </TitleBar>
        <MenuBar>
          {['File', 'View', 'Insert', 'Charts', 'Tools', 'Window', 'Help'].map((m) => <MenuItem type="button" key={m}>{m}</MenuItem>)}
        </MenuBar>
        <ToolRow>
          <ToolGroup>
            <Tool name="newChart" drop /><Tool name="profiles" drop /><ToolSep />
            <Tool name="market" /><Tool name="target" /><Tool name="stars" /><Tool name="panel" /><Tool name="tester" /><ToolSep />
            <ToolButton type="button" $label $w={59}><Icon name="order" />New Order</ToolButton>
            <Tool name="book" /><Tool name="user" /><Tool name="signal" />
            <ToolButton type="button" $label $w={66}><Icon name="auto" />AutoTrading</ToolButton>
          </ToolGroup>
          <ToolGroup>
            <Tool name="bars" /><Tool name="candles" pressed /><Tool name="line" /><ToolSep />
            <Tool name="zoomIn" /><Tool name="zoomOut" /><Tool name="tile" /><ToolSep />
            <Tool name="scroll" pressed /><Tool name="shift" pressed /><ToolSep />
            <Tool name="indicator" drop /><Tool name="clock" drop /><Tool name="template" drop />
          </ToolGroup>
          <ToolSide><Tool name="search" /><Tool name="chat" /></ToolSide>
        </ToolRow>
        <ToolRow>
          <ToolGroup>
            <Tool name="pointer" pressed /><Tool name="cross" /><ToolSep />
            <Tool name="vline" /><Tool name="hline" /><Tool name="slope" /><Tool name="channel" /><Tool name="fib" />
            <ToolButton type="button">A</ToolButton>
            <ToolButton type="button" aria-label="Text label"><svg width="12" height="12" viewBox="0 0 12 12" aria-hidden="true"><rect x="1.500" y="1.500" width="9" height="9" fill="none" stroke="#888" strokeDasharray="1 1" /><path d="M3.500 3.500h5M6 3.500v6" stroke="#444" strokeWidth="1.200" /></svg></ToolButton>
            <Tool name="arrows" drop />
          </ToolGroup>
          <ToolGroup>
            {['M1', 'M5', 'M15', 'M30', 'H1', 'H4', 'D1', 'W1', 'MN'].map((m) => <ToolButton type="button" key={m} $small $pressed={m === 'H1'}>{m}</ToolButton>)}
          </ToolGroup>
        </ToolRow>
        <Workspace>
          {[gold, goldHour, btc].map((d, i) => <ChartWindow key={d.title} d={d} id={i} />)}
        </Workspace>
        <TabStrip><ActiveTab /></TabStrip>
      </Terminal>
      <Banner>Trading is risky.Trade at your own discreation!!!!!!!!!!!</Banner>
      <Promo>
        <LikeTag>LIKE</LikeTag>
        <SubscribeTag>SUBSCRIBE</SubscribeTag>
        <PromoArt width="230" height="100" viewBox="133 541 230 100" aria-hidden="true">
          <path d="M195 585v4c3 2 8 2 11 2 5 6 14 7 24 7 8 0 10-3 11-8l2-14c0-3-1-5-4-5h-7v10l-8 6z" fill="#080808" />
          <path d="M225 562c1-5 2-9 5-8 3 1 2 6 1 9z" fill="#080808" />
          <path d="M190 567c0-2 1-2 3-2 9 0 17-2 22-11 2-4 1-9 5-9 4 1 4 5 3 9-1 4-2 6-3 9h11c4 0 4 2 4 4l-3 20c-1 3-2 3-5 3h-15c-8 0-15-1-18-5-2-5-3-11-4-18z" fill="#fff" />
          <path d="M329 600c7 1 11 4 13 10 2 8-1 14 4 22h-18zM304 631h40l2 2h-42z" fill="#080808" />
          <path d="M317 590c-1-5 5-7 6-3l1 5c8 4 10 11 9 20 0 7 3 11 2 18l-1 1-39-7c-2 0-3-1-2-3 7-4 8-10 9-15 2-10 6-15 15-16z" fill="#fff" />
          <path d="M307 632l10 2c-1 6-9 5-10-2z" fill="#fff" />
          <path d="M229 626l10 5-4 2-3 3z" fill="#fff" /><path d="M233 635l6-4v3l-5 3z" fill="#777" />
        </PromoArt>
      </Promo>
      <Pointer width="9" height="14" viewBox="0 0 9 14" aria-hidden="true"><path d="M1 1v10l2.500-2 1.500 4 1.500-.7L5 8.500h3.300z" fill="#fff" stroke="#611" strokeWidth=".7" /></Pointer>
    </Screen>
  );
}
